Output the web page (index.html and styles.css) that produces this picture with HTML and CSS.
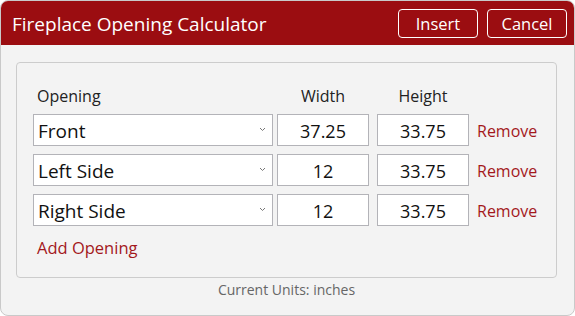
FILE: index.html
```html
<!DOCTYPE html>
<html>
<head>
<meta charset="utf-8">
<link rel="stylesheet" href="styles.css">
</head>
<body>
<div class="window">
  <div class="header">
    <div class="title">Fireplace Opening Calculator</div>
    <div class="actions">
      <button class="btn">Insert</button>
      <button class="btn">Cancel</button>
    </div>
  </div>
  <div class="panel">
    <div class="grid">
      <div class="lbl lbl-left">Opening</div>
      <div class="lbl lbl-center">Width</div>
      <div class="lbl lbl-center">Height</div>
      <div></div>

      <div class="select"><span>Front</span><svg class="chev" width="7" height="5" viewBox="0 0 7 5"><polyline points="1,1 3.5,3.5 6,1" fill="none" stroke="#777" stroke-width="1"/></svg></div>
      <div class="field">37.25</div>
      <div class="field">33.75</div>
      <div class="link">Remove</div>

      <div class="select"><span>Left Side</span><svg class="chev" width="7" height="5" viewBox="0 0 7 5"><polyline points="1,1 3.5,3.5 6,1" fill="none" stroke="#777" stroke-width="1"/></svg></div>
      <div class="field">12</div>
      <div class="field">33.75</div>
      <div class="link">Remove</div>

      <div class="select"><span>Right Side</span><svg class="chev" width="7" height="5" viewBox="0 0 7 5"><polyline points="1,1 3.5,3.5 6,1" fill="none" stroke="#777" stroke-width="1"/></svg></div>
      <div class="field">12</div>
      <div class="field">33.75</div>
      <div class="link">Remove</div>
    </div>
    <div class="add link">Add Opening</div>
  </div>
  <div class="units">Current Units: inches</div>
</div>
</body>
</html>
```
FILE: styles.css
```css
* { box-sizing: border-box; }
body {
  margin: 0;
  font-family: "Open Sans", "Noto Sans", sans-serif;
  background: #ffffff;
}
.window {
  width: 575px;
  height: 316px;
  border: 1px solid #c9c9c9;
  border-radius: 8px;
  background: #f3f3f3;
  overflow: hidden;
}
.header {
  height: 44px;
  background: #9b0d11;
  display: flex;
  align-items: center;
  justify-content: space-between;
  padding: 0 7px 0 11px;
}
.title {
  color: #ffffff;
  font-size: 19px;
  margin-top: 1px;
}
.actions {
  display: flex;
  gap: 9px;
}
.btn {
  width: 80px;
  height: 29px;
  background: transparent;
  border: 1.5px solid #ffffff;
  border-radius: 4px;
  color: #ffffff;
  font-family: inherit;
  font-size: 16.5px;
  padding: 0;
}
.panel {
  margin: 17px 17px 0 15px;
  height: 216px;
  border: 1px solid #cccccc;
  border-radius: 4px;
  padding: 22px 0 0 16px;
}
.grid {
  display: grid;
  grid-template-columns: 244px 100px 100px auto;
  row-gap: 8px;
}
.lbl {
  font-size: 16px;
  color: #222;
  line-height: 22px;
  margin-bottom: -1px;
  width: 92px;
}
.lbl-left { padding-left: 4px; }
.lbl-center { text-align: center; }
.select {
  width: 240px;
  height: 32px;
  background: #fff;
  border: 1px solid #b3b3b8;
  display: flex;
  align-items: center;
  justify-content: space-between;
  padding: 1px 6px 0 4px;
  font-size: 19px;
  color: #111;
}
.chev { margin-top: -3px; }
.field {
  width: 92px;
  height: 32px;
  background: #fff;
  border: 1px solid #b3b3b8;
  display: flex;
  align-items: center;
  justify-content: center;
  padding-top: 1px;
  font-size: 18px;
  color: #111;
}
.link {
  color: #a3181c;
  font-size: 16px;
  display: flex;
  align-items: center;
  padding-top: 1px;
}
.add {
  margin-top: 10px;
  padding-left: 4px;
  line-height: 22px;
  font-size: 16.5px;
}
.units {
  text-align: center;
  font-size: 14px;
  color: #666;
  line-height: 20px;
  margin-top: 2px;
  padding-right: 2px;
}
```
